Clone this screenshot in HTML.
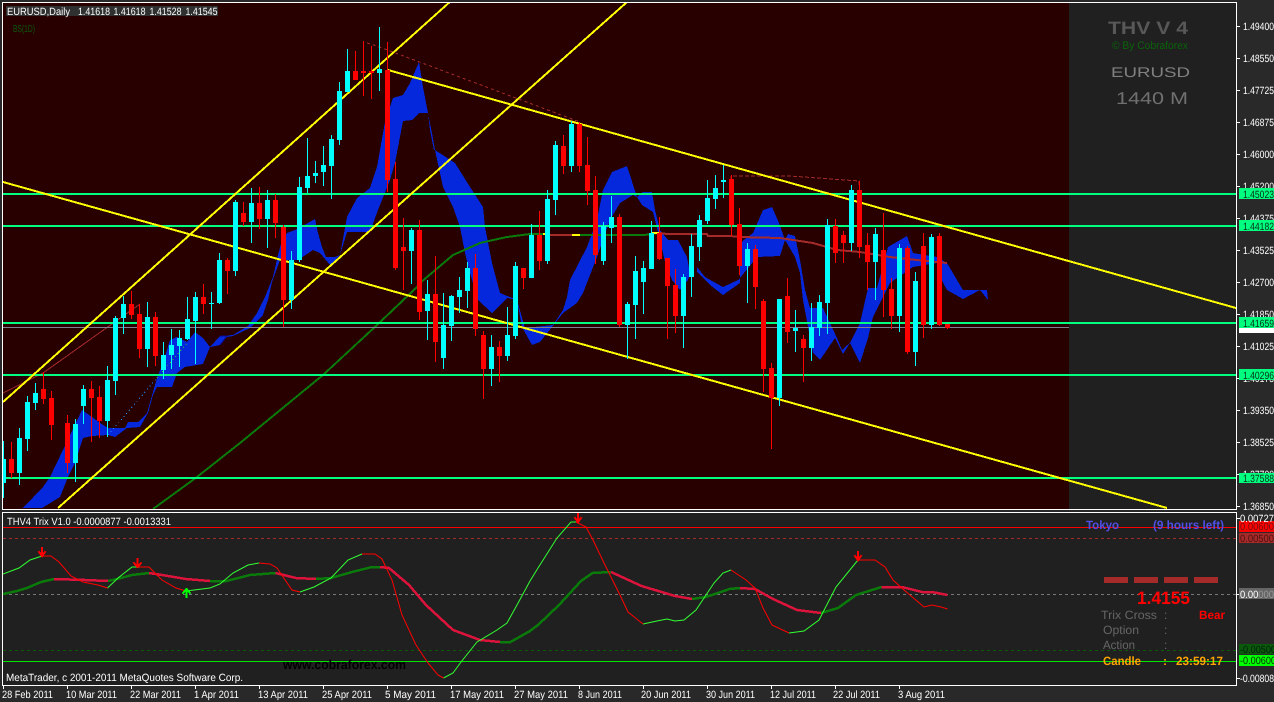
<!DOCTYPE html>
<html><head><meta charset="utf-8"><title>EURUSD,Daily</title>
<style>
html,body{margin:0;padding:0;background:#292929;width:1274px;height:702px;overflow:hidden}
svg{display:block;position:absolute;left:0;top:0}
text{font-family:"Liberation Sans",sans-serif;font-size:10.5px;text-rendering:geometricPrecision}
</style></head><body>
<svg width="1274" height="702" viewBox="0 0 1274 702" xmlns="http://www.w3.org/2000/svg">
<defs>
<clipPath id="c1"><rect x="3" y="3" width="1233" height="506"/></clipPath>
<clipPath id="c2"><rect x="3" y="513" width="1233" height="172"/></clipPath>
<clipPath id="c3"><rect x="1239" y="0" width="35" height="702"/></clipPath>
</defs>
<rect width="1274" height="702" fill="#292929"/>
<!-- main chart -->
<rect x="3" y="3" width="1233" height="506" fill="#280000"/>
<rect x="1069" y="3" width="167" height="506" fill="#202020"/>
<g clip-path="url(#c1)" shape-rendering="crispEdges">
<path fill="#0528dc" d="M23 508L43 487 50 477 63 450 82 410 92 417 100 423 108 428 108 435 92 436 83 438 75 463 68 477 60 497 42 508Z
M108 428L125 428 128 422 138 422 147 413 157 378 163 363 170 340 177 337 187 342 195 332 203 338 210 347 203 364 185 367 177 373 172 387 157 387 153 395 148 413 140 427 127 428 115 437 108 435Z
M210 347L220 336 233 335 248 326 257 313 265 297 273 277 278 255 282 240 287 233 295 230 315 219 318 233 322 247 326 257 335 257 340 255 330 265 320 253 313 250 298 260 280 260 272 282 268 300 263 315 250 328 233 336 227 337 220 345Z
M340 255L347 217 357 198 370 188 377 167 385 122 393 98 403 95 410 83 419 62 423 87 428 113 419 113 412 120 403 121 395 163 390 180 378 210 370 232 347 232Z
M428 113L432 133 435 150 434 150 430 130Z
M435 150L455 163 470 187 483 207 485 227 492 263 500 293 517 300 507 298 492 313 478 300 470 273 465 253 460 227 453 207 443 187Z
M517 300L522 327 532 345 540 342 552 327 563 313 577 303 583 293 597 257 610 220 620 203 633 195 637 197 627 166 612 172 603 190 597 220 587 247 570 280 567 297 563 310 553 325 525 328Z
M637 197L643 192 652 192 655 210 660 230 668 240 678 240 687 257 690 273 688 280 680 290 672 280 665 262 660 240 653 212 642 205Z
M697 267L705 277 723 287 738 280 740 278 740 283 723 295 710 285 697 272Z
M740 243L753 233 763 210 772 207 779 223 785 240 780 256 757 257 740 278Z
M785 240L788 234 795 236 800 260 805 290 810 308 823 308 837 338 842 350 845 347 850 343 843 354 835 338 820 360 813 353 808 327 803 300 800 273 795 257Z
M850 343L860 323 868 288 877 288 888 247 907 236 913 253 937 257 947 263 957 280 963 290 980 290 987 290 988 300 980 290 963 299 947 290 940 277 937 263 913 267 890 283 873 317 868 338 860 363Z"/>
<path fill="none" stroke="#0a0a90" d="M220 336L227 336 220 345"/>
<!-- MA -->
<g fill="none" stroke-width="2">
<path stroke="#0a7a0a" d="M153 509L197 477 240 443 323 375 377 325 417 287 420 283 453 255 480 243 507 237 530 234 543 234M576 235H644L660 233"/>
<path stroke="#ffff00" d="M543 234H550M572 235H580M652 233H660"/>
<path stroke="#a52a2a" d="M550 235H572M660 233L667 234H707L708 236H730L740 237 780 238 813 243 837 250 860 252 890 257 917 260 947 263"/>
</g>
<!-- thin trend -->
<g fill="none" stroke-width="1">
<path stroke="#a52a2a" d="M3 393L43 373 140 304"/>
<path stroke="#a52a2a" stroke-dasharray="3 3" d="M367 43L374 45 580 122"/>
<path stroke="#a52a2a" stroke-dasharray="4 2" d="M731 180V176H790L859 181V187"/>
<path stroke="#1e90ff" stroke-dasharray="1 3" d="M108 435L157 378"/>
<path stroke="#32cd32" stroke-dasharray="1 3" d="M157 378L188 342"/>
</g>
<rect x="3" y="327" width="1066" height="1" fill="#808090"/>
<!-- green levels -->
<path fill="none" stroke="#00ff7f" stroke-width="2" d="M3 194H1236M3 226H1236M3 323H1236M3 375H1236M3 478H1236"/>
<!-- yellow lines -->
<path fill="none" stroke="#ffff00" stroke-width="2" d="M3 402L452 0M58 508L627 2M388 70L1236 308M3 182L1167 508"/>
<!-- cyan candles -->
<path fill="none" stroke="#00ffff" d="M3.500 441V498M19.500 428V485M27.500 396V451M35.500 383V410M75.500 419V482M83.500 385V424M107.500 366V437M115.500 316V395M123.500 296V334M147.500 302V367M163.500 342V379M171.500 329V369M179.500 330V367M187.500 297V340M195.500 292V364M211.500 292V329M219.500 253V304M235.500 200V276M251.500 188V243M267.500 190V248M291.500 251V309M299.500 177V262M307.500 138V193M315.500 161V183M323.500 146V186M331.500 135V199M339.500 82V145M347.500 49V92M379.500 27V91M411.500 228V284M427.500 280V340M443.500 293V369M451.500 295V341M459.500 277V313M467.500 262V308M491.500 335V386M507.500 307V361M515.500 262V339M531.500 224V278M547.500 190V264M555.500 141V215M571.500 121V172M603.500 222V265M611.500 196V243M627.500 302V359M635.500 256V339M643.500 261V314M651.500 221V269M683.500 274V348M691.500 234V297M699.500 215V261M707.500 180V224M715.500 175V209M723.500 165V198M747.500 243V303M779.500 299V406M795.500 310V352M811.500 303V361M819.500 295V336M827.500 219V334M851.500 185V251M875.500 228V300M899.500 244V332M915.500 272V366M931.500 234V329"/>
<path fill="#00ffff" d="M1 459h5V483h-5zM17 438h5V473h-5zM25 402h5V439h-5zM33 393h5V403h-5zM73 424h5V463h-5zM81 389h5V406h-5zM105 380h5V421h-5zM113 318h5V381h-5zM121 304h5V318h-5zM145 317h5V349h-5zM161 355h5V370h-5zM169 345h5V355h-5zM177 338h5V346h-5zM185 319h5V339h-5zM193 297h5V321h-5zM209 303h5V304h-5zM217 260h5V303h-5zM233 202h5V271h-5zM249 203h5V222h-5zM265 200h5V219h-5zM289 260h5V300h-5zM297 187h5V260h-5zM305 176h5V188h-5zM313 173h5V176h-5zM321 165h5V172h-5zM329 139h5V166h-5zM337 91h5V140h-5zM345 71h5V92h-5zM377 69h5V73h-5zM409 230h5V251h-5zM425 294h5V311h-5zM441 325h5V358h-5zM449 296h5V326h-5zM457 290h5V297h-5zM465 268h5V291h-5zM489 347h5V369h-5zM505 335h5V356h-5zM513 266h5V336h-5zM529 235h5V278h-5zM545 199h5V261h-5zM553 145h5V200h-5zM569 124h5V166h-5zM601 226h5V261h-5zM609 217h5V228h-5zM625 304h5V325h-5zM633 271h5V305h-5zM641 268h5V282h-5zM649 233h5V269h-5zM681 277h5V316h-5zM689 246h5V277h-5zM697 220h5V247h-5zM705 198h5V221h-5zM713 188h5V199h-5zM721 180h5V182h-5zM745 249h5V266h-5zM777 299h5V398h-5zM793 328h5V331h-5zM809 327h5V348h-5zM817 302h5V328h-5zM825 225h5V303h-5zM849 190h5V243h-5zM873 234h5V262h-5zM897 248h5V316h-5zM913 281h5V352h-5zM929 237h5V325h-5z"/>
<!-- red candles -->
<path fill="none" stroke="#ff0000" d="M11.500 442V478M43.500 372V404M51.500 391V440M67.500 415V473M91.500 381V442M99.500 386V438M131.500 291V319M139.500 304V358M155.500 312V366M203.500 284V314M227.500 258V294M243.500 202V226M259.500 187V229M275.500 194V238M283.500 225V327M355.500 51V80M363.500 41V96M371.500 46V99M387.500 42V192M395.500 162V270M403.500 218V290M419.500 220V320M435.500 256V362M475.500 254V336M483.500 331V399M499.500 341V382M523.500 268V289M539.500 211V270M563.500 135V174M579.500 122V172M587.500 137V205M595.500 176V264M619.500 214V327M659.500 217V260M667.500 258V339M675.500 269V333M731.500 175V236M739.500 208V275M755.500 245V309M763.500 299V392M771.500 363V449M787.500 278V343M803.500 335V382M835.500 219V263M843.500 231V263M859.500 181V258M867.500 233V290M883.500 213V317M891.500 278V329M907.500 246V354M923.500 233V338M939.500 233V326M947.500 324V329"/>
<path fill="#ff0000" d="M9 459h5V473h-5zM41 389h5V399h-5zM49 398h5V425h-5zM65 423h5V463h-5zM89 389h5V398h-5zM97 397h5V421h-5zM129 304h5V315h-5zM137 314h5V349h-5zM153 317h5V356h-5zM201 297h5V304h-5zM225 260h5V271h-5zM241 213h5V222h-5zM257 203h5V219h-5zM273 200h5V223h-5zM281 227h5V300h-5zM353 71h5V80h-5zM361 71h5V73h-5zM369 71h5V73h-5zM385 70h5V180h-5zM393 179h5V268h-5zM401 247h5V251h-5zM417 230h5V312h-5zM433 294h5V342h-5zM473 268h5V329h-5zM481 335h5V369h-5zM497 347h5V356h-5zM521 268h5V278h-5zM537 235h5V261h-5zM561 146h5V166h-5zM577 124h5V166h-5zM585 165h5V191h-5zM593 190h5V255h-5zM617 217h5V325h-5zM657 233h5V259h-5zM665 258h5V286h-5zM673 285h5V316h-5zM729 179h5V225h-5zM737 224h5V266h-5zM753 249h5V287h-5zM761 301h5V369h-5zM769 368h5V398h-5zM785 296h5V332h-5zM801 339h5V348h-5zM833 226h5V253h-5zM841 235h5V243h-5zM857 190h5V247h-5zM865 245h5V262h-5zM881 250h5V290h-5zM889 289h5V316h-5zM905 248h5V352h-5zM921 246h5V325h-5zM937 236h5V325h-5zM945 324h5V328h-5z"/>
</g>
<rect x="6" y="6" width="212" height="10" fill="#2f3030"/>
<g fill="#fff">
<text x="7" y="15" textLength="63" lengthAdjust="spacingAndGlyphs">EURUSD,Daily</text>
<text x="78" y="15" textLength="32" lengthAdjust="spacingAndGlyphs">1.41618</text>
<text x="113.500" y="15" textLength="32" lengthAdjust="spacingAndGlyphs">1.41618</text>
<text x="149.500" y="15" textLength="32" lengthAdjust="spacingAndGlyphs">1.41528</text>
<text x="185.500" y="15" textLength="32" lengthAdjust="spacingAndGlyphs">1.41545</text>
</g>
<text x="13" y="32" fill="#0a5a0a" textLength="22" lengthAdjust="spacingAndGlyphs" style="font-size:10px">BS(1D)</text>
<!-- info panel -->
<text x="1108" y="34" fill="#585858" textLength="80" lengthAdjust="spacingAndGlyphs" style="font-size:18px;font-weight:bold">THV V 4</text>
<text x="1112" y="49" fill="#0a640a" textLength="76" lengthAdjust="spacingAndGlyphs" style="font-size:11px">© By Cobraforex</text>
<text x="1111" y="77" fill="#808080" textLength="79" lengthAdjust="spacingAndGlyphs" style="font-size:14px">EURUSD</text>
<text x="1116" y="104" fill="#707070" textLength="72" lengthAdjust="spacingAndGlyphs" style="font-size:17px">1440 M</text>
<!-- borders -->
<g shape-rendering="crispEdges" fill="#fff">
<rect x="2" y="2" width="1235" height="1"/><rect x="2" y="2" width="1" height="508"/><rect x="1236" y="2" width="1" height="508"/><rect x="2" y="509" width="1235" height="1"/>
<rect x="2" y="512" width="1235" height="1"/><rect x="2" y="512" width="1" height="174"/><rect x="1236" y="512" width="1" height="174"/><rect x="2" y="685" width="1235" height="1"/>
</g>
<!-- indicator -->
<rect x="3" y="513" width="1233" height="172" fill="#202020"/>
<g clip-path="url(#c2)" shape-rendering="crispEdges" fill="none">
<path stroke="#ff0000" d="M3 527.500H1236"/>
<path stroke="#00e600" d="M3 661.500H1236"/>
<path stroke="#a52a2a" stroke-dasharray="3 3" d="M3 538.500H1236"/>
<path stroke="#777" stroke-dasharray="3 3" d="M3 594.500H1236"/>
<path stroke="#0a5a0a" stroke-dasharray="3 3" d="M3 650.500H1236"/>
</g>
<g clip-path="url(#c2)" fill="none">
<g stroke-width="2.500" shape-rendering="crispEdges">
<path stroke="#0a7a0a" d="M3 594L17 591 27 588 41 582 54 579M108 581L117 579 132 575 149 573M210 581L226.500 581 250 575 275.500 573M316 579L331 578 352 572 372 567 380 567M500 642L510.500 642 530 631 538 625 559 605 581 581 592.500 573 611 572M692 599L706 597 729.500 589 740 588M821 613L838 608 856 595 881.500 587"/>
<path stroke="#dc143c" d="M54 579L85 580 108 581M149 573L162 575 186 579 210 581M275.500 573L296 578 316 579M380 567L389 568 409 585 426 605 453 630 480 640 500 642M611 572L641.500 586 675 596 692 599M740 588L755 589 773 599 797 610 821 613M881.500 587L902 587 922 592 932 592 947.500 595"/>
</g>
<g stroke-width="1">
<path stroke="#32ff32" d="M3 574L19 568 30 560 42 556M107.500 588L118 578 132 567 139 567M186 591L210 588 220 584 233 573 248 565 259 563M300 592L314 587 331 578 348 560 362 554M443.500 678L453 673 461 662 477 642 497 630 507 623 517 605 530 581 538 568 557 538 571 522 576 522M643 624L657 621 667 619 675 621 684 620 696 610 714 583 723 573 731 570M789 633L804 631 819 620 836 587 858 560"/>
<path stroke="#ff0000" d="M42 556L51 556 59 562 71 576 83 582 98 585 107.500 588M139 567L149 567 162 580 176 588 186 591M259 563L270 564 277 568 292 590 300 592M362 554L375 554 382 559 392 580 402 615 416 645 428 663 438 675 443.500 678M576 522L586 527 593 540 604 563 620 595 628 612 643 624M731 570L746 580 755 588 763 608 772 625 789 633M858 560L875 560 885 567 893 580 904 590 924 607 932 605 941 607 947.500 609"/>
</g>
</g>
<!-- arrows -->
<g fill="none" stroke-width="2" stroke-linecap="square" shape-rendering="crispEdges">
<path stroke="#ff0000" d="M42 548V556M39 552L42 556 45 552M137.500 559V567M134 563L137.500 567 141 563M578 514V522M575 518L578 522 581 518M858 552V560M855 556L858 560 861 556"/>
<path stroke="#00ff00" d="M186.500 597V589M183 593L186.500 589 190 593"/>
</g>
<g fill="#fff">
<text x="7" y="525" textLength="164" lengthAdjust="spacingAndGlyphs">THV4 Trix V1.0 -0.0000877 -0.0013331</text>
<text x="6" y="681" textLength="237" lengthAdjust="spacingAndGlyphs">MetaTrader, c 2001-2011 MetaQuotes Software Corp.</text>
</g>
<text x="283" y="669" fill="#000" textLength="123" lengthAdjust="spacingAndGlyphs" style="font-size:13px;font-weight:bold">www.cobraforex.com</text>
<!-- panel text -->
<text x="1086" y="529" fill="#4f4fe6" textLength="33" lengthAdjust="spacingAndGlyphs" style="font-size:12px;font-weight:bold">Tokyo</text>
<text x="1153" y="529" fill="#4f4fe6" textLength="71" lengthAdjust="spacingAndGlyphs" style="font-size:12px;font-weight:bold">(9 hours left)</text>
<g fill="#a52a2a" shape-rendering="crispEdges"><rect x="1104" y="577" width="24" height="6"/><rect x="1134" y="577" width="24" height="6"/><rect x="1164" y="577" width="24" height="6"/><rect x="1194" y="577" width="24" height="6"/></g>
<text x="1137" y="604" fill="#ff0000" textLength="53" lengthAdjust="spacingAndGlyphs" style="font-size:18px;font-weight:bold">1.4155</text>
<g fill="#666">
<text x="1101" y="619" textLength="56" lengthAdjust="spacingAndGlyphs" style="font-size:12px">Trix Cross</text>
<text x="1103" y="634" textLength="36" lengthAdjust="spacingAndGlyphs" style="font-size:12px">Option</text>
<text x="1103" y="649" textLength="32" lengthAdjust="spacingAndGlyphs" style="font-size:12px">Action</text>
<text x="1164" y="619" style="font-size:12px">:</text>
<text x="1164" y="634" style="font-size:12px">:</text>
<text x="1164" y="649" style="font-size:12px">:</text>
</g>
<text x="1199" y="619" fill="#ff0000" textLength="26" lengthAdjust="spacingAndGlyphs" style="font-size:12px;font-weight:bold">Bear</text>
<g fill="#ffa500">
<text x="1103" y="665" textLength="38" lengthAdjust="spacingAndGlyphs" style="font-size:12px;font-weight:bold">Candle</text>
<text x="1163" y="665" style="font-size:12px;font-weight:bold">:</text>
<text x="1176" y="665" textLength="47" lengthAdjust="spacingAndGlyphs" style="font-size:12px;font-weight:bold">23:59:17</text>
</g>
<!-- price axis -->
<g fill="#fff" shape-rendering="crispEdges">
<path d="M1237 26h3v1h-3zM1237 58h3v1h-3zM1237 90h3v1h-3zM1237 122h3v1h-3zM1237 154h3v1h-3zM1237 186h3v1h-3zM1237 218h3v1h-3zM1237 250h3v1h-3zM1237 282h3v1h-3zM1237 314h3v1h-3zM1237 346h3v1h-3zM1237 378h3v1h-3zM1237 410h3v1h-3zM1237 442h3v1h-3zM1237 474h3v1h-3zM1237 506h3v1h-3zM1237 518h3v1h-3zM1237 594h3v1h-3zM1237 678h3v1h-3zM3 686h1v3h-1zM67 686h1v3h-1zM131 686h1v3h-1zM195 686h1v3h-1zM259 686h1v3h-1zM323 686h1v3h-1zM387 686h1v3h-1zM451 686h1v3h-1zM515 686h1v3h-1zM579 686h1v3h-1zM643 686h1v3h-1zM707 686h1v3h-1zM771 686h1v3h-1zM835 686h1v3h-1zM899 686h1v3h-1z"/>
</g>
<g fill="#fff">
<text x="1243" y="30" textLength="31" lengthAdjust="spacingAndGlyphs">1.49400</text>
<text x="1243" y="62" textLength="31" lengthAdjust="spacingAndGlyphs">1.48550</text>
<text x="1243" y="94" textLength="31" lengthAdjust="spacingAndGlyphs">1.47725</text>
<text x="1243" y="126" textLength="31" lengthAdjust="spacingAndGlyphs">1.46875</text>
<text x="1243" y="158" textLength="31" lengthAdjust="spacingAndGlyphs">1.46000</text>
<text x="1243" y="190" textLength="31" lengthAdjust="spacingAndGlyphs">1.45200</text>
<text x="1243" y="222" textLength="31" lengthAdjust="spacingAndGlyphs">1.44375</text>
<text x="1243" y="254" textLength="31" lengthAdjust="spacingAndGlyphs">1.43525</text>
<text x="1243" y="286" textLength="31" lengthAdjust="spacingAndGlyphs">1.42700</text>
<text x="1243" y="318" textLength="31" lengthAdjust="spacingAndGlyphs">1.41850</text>
<text x="1243" y="350" textLength="31" lengthAdjust="spacingAndGlyphs">1.41025</text>
<text x="1243" y="382" textLength="31" lengthAdjust="spacingAndGlyphs">1.40175</text>
<text x="1243" y="414" textLength="31" lengthAdjust="spacingAndGlyphs">1.39350</text>
<text x="1243" y="446" textLength="31" lengthAdjust="spacingAndGlyphs">1.38525</text>
<text x="1243" y="478" textLength="31" lengthAdjust="spacingAndGlyphs">1.37700</text>
<text x="1243" y="510" textLength="31" lengthAdjust="spacingAndGlyphs">1.36850</text>
</g>
<g clip-path="url(#c3)" shape-rendering="crispEdges">
<rect x="1239" y="328" width="35" height="5" fill="#fff"/>
<rect x="1239" y="188" width="35" height="11" fill="#00ff7f"/>
<rect x="1239" y="220" width="35" height="11" fill="#00ff7f"/>
<rect x="1239" y="317" width="35" height="11" fill="#00ff7f"/>
<rect x="1239" y="369" width="35" height="11" fill="#00ff7f"/>
<rect x="1239" y="473" width="35" height="10" fill="#00ff7f"/>
<rect x="1239" y="521" width="35" height="11" fill="#ff0000"/>
<rect x="1239" y="533" width="35" height="10" fill="#a52a2a"/>
<rect x="1239" y="588" width="35" height="11" fill="#666"/>
<rect x="1239" y="644" width="35" height="10" fill="#0a5a0a"/>
<rect x="1239" y="655" width="35" height="11" fill="#00ff00"/>
</g>
<g fill="#0a2a18">
<text x="1243" y="198" textLength="31" lengthAdjust="spacingAndGlyphs">1.45023</text>
<text x="1243" y="230" textLength="31" lengthAdjust="spacingAndGlyphs">1.44182</text>
<text x="1243" y="327" textLength="31" lengthAdjust="spacingAndGlyphs">1.41659</text>
<text x="1243" y="379" textLength="31" lengthAdjust="spacingAndGlyphs">1.40296</text>
<text x="1243" y="482" textLength="31" lengthAdjust="spacingAndGlyphs">1.37588</text>
</g>
<text x="1240" y="522" fill="#fff" textLength="34" lengthAdjust="spacingAndGlyphs">0.00727</text>
<text x="1240" y="530" fill="#701010" textLength="34" lengthAdjust="spacingAndGlyphs">0.00600</text>
<text x="1240" y="542" fill="#501010" textLength="34" lengthAdjust="spacingAndGlyphs">0.00500</text>
<text x="1240" y="598" fill="#fff" textLength="34" lengthAdjust="spacingAndGlyphs">0.00<tspan fill="#999">000</tspan></text>
<text x="1240" y="653" fill="#021" textLength="36" lengthAdjust="spacingAndGlyphs">-0.00500</text>
<text x="1240" y="664" fill="#063006" textLength="36" lengthAdjust="spacingAndGlyphs">-0.00600</text>
<text x="1240" y="682" fill="#fff" textLength="34" lengthAdjust="spacingAndGlyphs">-0.00808</text>
<!-- dates -->
<g fill="#fff">
<text x="2" y="698" textLength="51" lengthAdjust="spacingAndGlyphs">28 Feb 2011</text>
<text x="66" y="698" textLength="51" lengthAdjust="spacingAndGlyphs">10 Mar 2011</text>
<text x="130" y="698" textLength="51" lengthAdjust="spacingAndGlyphs">22 Mar 2011</text>
<text x="194" y="698" textLength="45" lengthAdjust="spacingAndGlyphs">1 Apr 2011</text>
<text x="258" y="698" textLength="50" lengthAdjust="spacingAndGlyphs">13 Apr 2011</text>
<text x="322" y="698" textLength="50" lengthAdjust="spacingAndGlyphs">25 Apr 2011</text>
<text x="385" y="698" textLength="51" lengthAdjust="spacingAndGlyphs">5 May 2011</text>
<text x="450" y="698" textLength="54" lengthAdjust="spacingAndGlyphs">17 May 2011</text>
<text x="514" y="698" textLength="54" lengthAdjust="spacingAndGlyphs">27 May 2011</text>
<text x="578" y="698" textLength="44" lengthAdjust="spacingAndGlyphs">8 Jun 2011</text>
<text x="641" y="698" textLength="50" lengthAdjust="spacingAndGlyphs">20 Jun 2011</text>
<text x="706" y="698" textLength="49" lengthAdjust="spacingAndGlyphs">30 Jun 2011</text>
<text x="770" y="698" textLength="46" lengthAdjust="spacingAndGlyphs">12 Jul 2011</text>
<text x="833" y="698" textLength="47" lengthAdjust="spacingAndGlyphs">22 Jul 2011</text>
<text x="898" y="698" textLength="47" lengthAdjust="spacingAndGlyphs">3 Aug 2011</text>
</g>
</svg>
</body></html>
